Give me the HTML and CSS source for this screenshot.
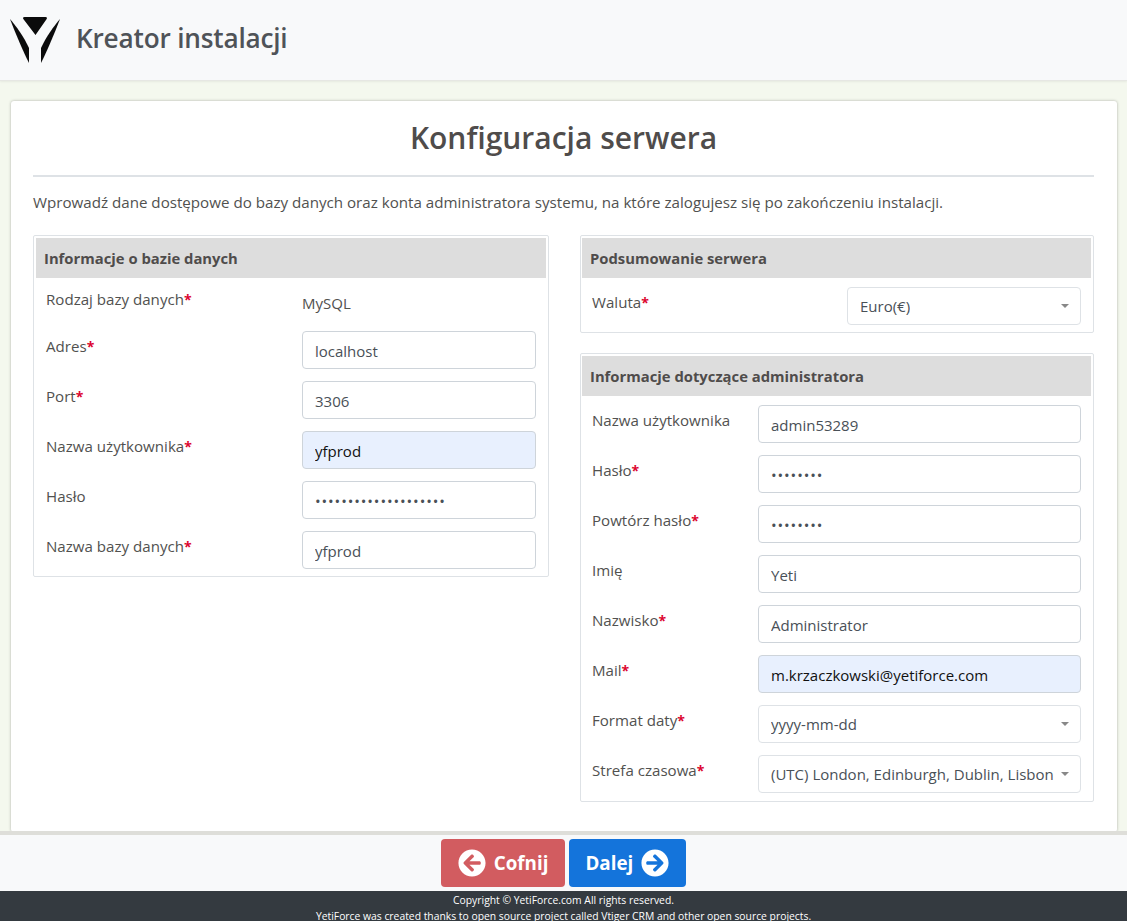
FILE: index.html
```html
<!DOCTYPE html>
<html lang="pl">
<head>
  <meta charset="UTF-8">
  <title>Kreator instalacji</title>
  <link rel="stylesheet" href="styles.css">
</head>
<body>
  <header class="topbar">
    <svg class="logo" viewBox="0 0 50 46" aria-hidden="true">
      <path d="M14.500 0h21c1.500 0 2 1 1 2.200L25.500 18 13.500 2.200c-1-1.200-.5-2.200 1-2.200z" />
      <path d="M0 2C6 9 14 20 19 31V46C14 36 6 18 0 2z" />
      <path d="M50 2C44 9 36 20 31 31V46C36 36 44 18 50 2z" />
    </svg>
    <span class="topbar-title">Kreator instalacji</span>
  </header>

  <main class="content">
    <div class="card">
      <h1 class="card-title">Konfiguracja serwera</h1>
      <p class="intro">Wprowadź dane dostępowe do bazy danych oraz konta administratora systemu, na które zalogujesz się po zakończeniu instalacji.</p>

      <div class="columns">
        <section class="panel">
          <h2 class="panel-head">Informacje o bazie danych</h2>
          <div class="rows rows-db">
            <div class="row">
              <label class="label">Rodzaj bazy danych<b>*</b></label>
              <span class="static">MySQL</span>
            </div>
            <div class="row">
              <label class="label">Adres<b>*</b></label>
              <input class="field" type="text" value="localhost">
            </div>
            <div class="row">
              <label class="label">Port<b>*</b></label>
              <input class="field" type="text" value="3306">
            </div>
            <div class="row">
              <label class="label">Nazwa użytkownika<b>*</b></label>
              <input class="field autofill" type="text" value="yfprod">
            </div>
            <div class="row">
              <label class="label">Hasło</label>
              <input class="field" type="password" value="aaaaaaaaaaaaaaaaaaaa">
            </div>
            <div class="row">
              <label class="label">Nazwa bazy danych<b>*</b></label>
              <input class="field" type="text" value="yfprod">
            </div>
          </div>
        </section>

        <div class="side">
          <section class="panel">
            <h2 class="panel-head">Podsumowanie serwera</h2>
            <div class="rows rows-cur">
              <div class="row">
                <label class="label">Waluta<b>*</b></label>
                <div class="field select"><span>Euro(€)</span><i class="caret"></i></div>
              </div>
            </div>
          </section>

          <section class="panel">
            <h2 class="panel-head">Informacje dotyczące administratora</h2>
            <div class="rows rows-admin">
              <div class="row">
                <label class="label">Nazwa użytkownika</label>
                <input class="field" type="text" value="admin53289">
              </div>
              <div class="row">
                <label class="label">Hasło<b>*</b></label>
                <input class="field" type="password" value="aaaaaaaa">
              </div>
              <div class="row">
                <label class="label">Powtórz hasło<b>*</b></label>
                <input class="field" type="password" value="aaaaaaaa">
              </div>
              <div class="row">
                <label class="label">Imię</label>
                <input class="field" type="text" value="Yeti">
              </div>
              <div class="row">
                <label class="label">Nazwisko<b>*</b></label>
                <input class="field" type="text" value="Administrator">
              </div>
              <div class="row">
                <label class="label">Mail<b>*</b></label>
                <input class="field autofill" type="text" value="m.krzaczkowski@yetiforce.com">
              </div>
              <div class="row">
                <label class="label">Format daty<b>*</b></label>
                <div class="field select"><span>yyyy-mm-dd</span><i class="caret"></i></div>
              </div>
              <div class="row">
                <label class="label">Strefa czasowa<b>*</b></label>
                <div class="field select"><span>(UTC) London, Edinburgh, Dublin, Lisbon</span><i class="caret"></i></div>
              </div>
            </div>
          </section>
        </div>
      </div>
    </div>
  </main>

  <div class="actions">
    <button class="btn btn-back">
      <svg class="btn-icon" viewBox="0 0 512 512" aria-hidden="true"><path d="M256 504C119 504 8 393 8 256S119 8 256 8s248 111 248 248-111 248-248 248zm28.900-143.600L209.400 288H392c13.300 0 24-10.700 24-24v-16c0-13.300-10.700-24-24-24H209.400l75.500-72.400c9.700-9.300 9.900-24.800.4-34.300l-11-10.900c-9.400-9.400-24.600-9.400-33.900 0L107.700 239c-9.400 9.400-9.400 24.600 0 33.900l132.700 132.700c9.400 9.400 24.600 9.400 33.900 0l11-10.900c9.500-9.500 9.300-25-.4-34.300z"/></svg>
      Cofnij
    </button>
    <button class="btn btn-next">
      Dalej
      <svg class="btn-icon" viewBox="0 0 512 512" aria-hidden="true"><path d="M256 8c137 0 248 111 248 248S393 504 256 504 8 393 8 256 119 8 256 8zm-28.900 143.600l75.500 72.400H120c-13.300 0-24 10.700-24 24v16c0 13.300 10.700 24 24 24h182.600l-75.500 72.400c-9.700 9.300-9.900 24.800-.4 34.300l11 10.900c9.400 9.400 24.600 9.400 33.900 0L404.300 273c9.400-9.400 9.400-24.600 0-33.900L271.600 106.300c-9.400-9.400-24.600-9.400-33.900 0l-11 10.900c-9.500 9.600-9.300 25.100.4 34.400z"/></svg>
    </button>
  </div>

  <footer class="footer">
    <p>Copyright © YetiForce.com All rights reserved.</p>
    <p>YetiForce was created thanks to open source project called Vtiger CRM and other open source projects.</p>
  </footer>
</body>
</html>
```

FILE: styles.css
```css
* {
  box-sizing: border-box;
}
html, body {
  height: 921px;
  overflow: hidden;
}
body {
  margin: 0;
  display: flex;
  flex-direction: column;
  background-color: #f4f8ee;
  font-family: "Open Sans", "Noto Sans", sans-serif;
  font-size: 14px;
  color: #495057;
}

.topbar {
  height: 81px;
  flex: none;
  display: flex;
  align-items: center;
  gap: 16px;
  padding: 0 10px;
  background-color: #f8f9fa;
  border-bottom: 1px solid #e6e7e3;
  box-shadow: 0 1px 2px rgba(0, 0, 0, 0.06);
}
.logo {
  width: 50px;
  height: 46px;
  fill: #0b0b0b;
}
.topbar-title {
  margin-top: -5px;
  font-size: 26.200px;
  font-weight: 600;
  color: #4f5358;
  letter-spacing: -0.2px;
}

.content {
  flex: 1;
  min-height: 0;
  padding: 20px 10px 0 11px;
}
.card {
  height: 731px;
  padding: 15px 23px 0 22px;
  background-color: #fff;
  border-radius: 3px;
  box-shadow: 0 0 3px rgba(0, 0, 0, 0.3);
}
.card-title {
  margin: 0;
  padding-bottom: 16px;
  text-align: center;
  font-size: 30px;
  line-height: 43px;
  font-weight: 600;
  color: #4f4c4b;
  border-bottom: 2px solid #dee2e6;
}
.intro {
  margin: 15px 0 22px;
  font-size: 15.150px;
  line-height: 21px;
  color: #51514f;
  white-space: nowrap;
}

.columns {
  display: grid;
  grid-template-columns: 516px 514px;
  justify-content: space-between;
  align-items: start;
}
.side {
  display: flex;
  flex-direction: column;
  gap: 20px;
}
.panel {
  padding: 2px;
  border: 1px solid #dee2e6;
  border-radius: 2px;
}
.panel-head {
  margin: 0;
  height: 40px;
  padding: 0 8px;
  display: flex;
  align-items: center;
  font-size: 14.800px;
  font-weight: 700;
  color: #4f4c4b;
  background-color: #dddddd;
}
.side .panel {
  padding-left: 1px;
}
.side .panel-head {
  padding-left: 8px;
}

.rows {
  padding: 9px 10px 0;
}
.row {
  display: grid;
  align-items: start;
  height: 50px;
}
.rows-db .row {
  grid-template-columns: 256px 234px;
}
.rows-db .row:first-child {
  height: 44px;
}
.rows-db .row:first-child .label {
  padding-top: 2px;
}
.rows-db .row:last-child {
  height: 43px;
}
.rows-cur .row {
  grid-template-columns: 255px 234px;
  height: 43px;
}
.rows-admin .row {
  grid-template-columns: 166px 323px;
}
.rows-admin .row:last-child {
  height: 44px;
}
.label {
  padding-top: 5px;
  font-size: 15.100px;
  line-height: 21px;
  color: #51514f;
  white-space: nowrap;
}
.label b {
  color: #dc0530;
  font-size: 14px;
  font-weight: 700;
}
.static {
  padding-top: 6px;
  line-height: 21px;
  font-size: 15px;
  color: #51514f;
}
.field {
  width: 100%;
  height: 38px;
  padding: 2px 12px 0;
  font-family: inherit;
  font-size: 15px;
  color: #495057;
  background-color: #fff;
  border: 1px solid #ced4da;
  border-radius: 4px;
  outline: none;
}
input[type="password"].field {
  letter-spacing: 0.9px;
}
.autofill {
  background-color: #e8f0fe;
  color: #111;
}
.select {
  display: flex;
  align-items: center;
  justify-content: space-between;
  gap: 3px;
  padding: 0 11px 0 12px;
  border-color: #dee2e6;
  white-space: nowrap;
  overflow: hidden;
}
.select span {
  overflow: hidden;
}
.caret {
  flex: none;
  width: 0;
  height: 0;
  border-left: 4px solid transparent;
  border-right: 4px solid transparent;
  border-top: 4px solid #888;
}

.actions {
  height: 60px;
  flex: none;
  display: flex;
  justify-content: center;
  align-items: flex-start;
  gap: 4px;
  padding-top: 4px;
  background-color: #f8f9fa;
  border-top: 4px solid #deded9;
}
.btn {
  height: 48px;
  display: flex;
  align-items: center;
  gap: 8px;
  padding: 0 16.500px;
  font-family: inherit;
  font-size: 18.800px;
  font-weight: 700;
  color: #fff;
  border: none;
  border-radius: 4px;
}
.btn-back {
  background-color: #d25c60;
}
.btn-next {
  background-color: #1474db;
}
.btn-icon {
  width: 28px;
  height: 28px;
  fill: #fff;
}

.footer {
  height: 30px;
  flex: none;
  padding-top: 1px;
  text-align: center;
  font-size: 10.350px;
  line-height: 16px;
  color: #fff;
  background-color: #343a40;
  overflow: hidden;
}
.footer p {
  margin: 0;
}
```
